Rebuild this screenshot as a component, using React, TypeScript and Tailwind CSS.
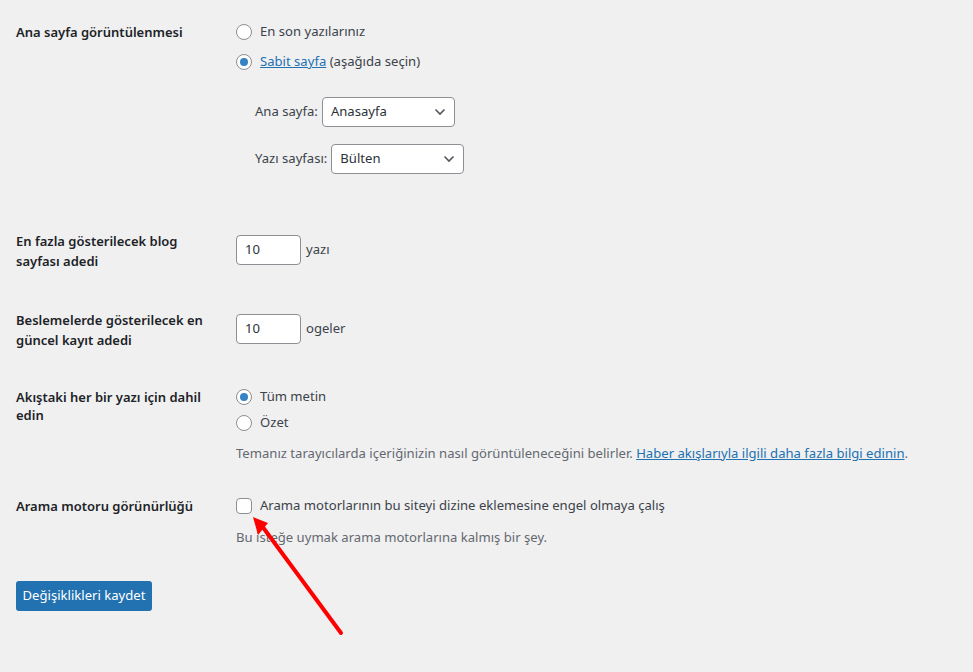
import React from 'react';

const font = { fontFamily: '"Noto Sans", "Open Sans", Arial, sans-serif' };

function Radio({ checked }: { checked?: boolean }) {
  return (
    <span className="flex h-4 w-4 shrink-0 items-center justify-center rounded-full border border-[#8c8f94] bg-white">
      {checked && <span className="h-2 w-2 rounded-full bg-[#3582c4]" />}
    </span>
  );
}

function Select({ value, width }: { value: string; width: string }) {
  return (
    <div className={`flex h-[30px] ${width} items-center justify-between rounded-[4px] border border-[#8c8f94] bg-white pl-2 pr-2`}>
      <span className="text-[#2c3338]">{value}</span>
      <svg width="12" height="8" viewBox="0 0 12 8" fill="none">
        <path d="M1.5 1.5L6 6L10.5 1.5" stroke="#50575e" strokeWidth="1.6" />
      </svg>
    </div>
  );
}

function NumberInput({ value }: { value: string }) {
  return (
    <div className="flex h-[30px] w-[65px] items-center rounded-[4px] border border-[#8c8f94] bg-white px-2 text-[#2c3338]">
      {value}
    </div>
  );
}

export default function App() {
  return (
    <div className="relative min-h-[672px] w-full bg-[#f0f0f1] pl-4 pt-[23px] text-[13.1px] text-[#3c434a]" style={font}>
      {/* Ana sayfa görüntülenmesi */}
      <div className="flex">
        <div className="w-[220px] shrink-0 text-[13px] font-semibold leading-[18px] text-[#1d2327]">Ana sayfa görüntülenmesi</div>
        <div className="flex flex-col">
          <label className="flex h-[18px] items-center gap-2">
            <Radio />
            <span>En son yazılarınız</span>
          </label>
          <label className="mt-[12px] flex h-[18px] items-center gap-2">
            <Radio checked />
            <span>
              <a className="text-[#2271b1] underline">Sabit sayfa</a> (aşağıda seçin)
            </span>
          </label>
          <div className="ml-[19px] mt-[26px] flex items-center gap-[4px]">
            <span>Ana sayfa:</span>
            <Select value="Anasayfa" width="w-[133px]" />
          </div>
          <div className="ml-[19px] mt-[17px] flex items-center gap-[4px]">
            <span>Yazı sayfası:</span>
            <Select value="Bülten" width="w-[133px]" />
          </div>
        </div>
      </div>

      {/* Blog sayfası adedi */}
      <div className="mt-[57px] flex">
        <div className="w-[220px] shrink-0 pr-4 text-[13px] font-semibold leading-[20px] text-[#1d2327]">
          En fazla gösterilecek blog sayfası adedi
        </div>
        <div className="mt-[4px] flex items-center gap-[5px] self-start">
          <NumberInput value="10" />
          <span>yazı</span>
        </div>
      </div>

      {/* Besleme */}
      <div className="mt-[39px] flex">
        <div className="w-[220px] shrink-0 pr-4 text-[13px] font-semibold leading-[20px] text-[#1d2327]">
          Beslemelerde gösterilecek en güncel kayıt adedi
        </div>
        <div className="mt-[4px] flex items-center gap-[5px] self-start">
          <NumberInput value="10" />
          <span>ogeler</span>
        </div>
      </div>

      {/* Akış */}
      <div className="mt-[38px] flex">
        <div className="w-[220px] shrink-0 pr-4 text-[13px] font-semibold leading-[18px] text-[#1d2327]">
          Akıştaki her bir yazı için dahil edin
        </div>
        <div className="flex flex-col">
          <label className="flex h-[18px] items-center gap-2">
            <Radio checked />
            <span>Tüm metin</span>
          </label>
          <label className="mt-[8px] flex h-[18px] items-center gap-2">
            <Radio />
            <span>Özet</span>
          </label>
          <p className="mt-[12px] leading-[18px] text-[#646970]">
            Temanız tarayıcılarda içeriğinizin nasıl görüntüleneceğini belirler.{' '}
            <a className="text-[#2271b1] underline">Haber akışlarıyla ilgili daha fazla bilgi edinin</a>.
          </p>
        </div>
      </div>

      {/* Arama motoru */}
      <div className="mt-[35px] flex">
        <div className="w-[220px] shrink-0 text-[13px] font-semibold leading-[18px] text-[#1d2327]">Arama motoru görünürlüğü</div>
        <div className="flex flex-col">
          <label className="flex h-[18px] items-center gap-2">
            <span className="h-4 w-4 shrink-0 rounded-[4px] border border-[#8c8f94] bg-white" />
            <span>Arama motorlarının bu siteyi dizine eklemesine engel olmaya çalış</span>
          </label>
          <p className="mt-[13px] leading-[18px] text-[#646970]">Bu isteğe uymak arama motorlarına kalmış bir şey.</p>
        </div>
      </div>

      <button className="mt-[35px] h-[30px] w-[136px] rounded-[3px] bg-[#2271b1] text-white">
        Değişiklikleri kaydet
      </button>

      {/* annotation arrow */}
      <svg className="pointer-events-none absolute left-0 top-0" width="973" height="672">
        <line x1="341" y1="633" x2="262" y2="526" stroke="#ff0000" strokeWidth="4" strokeLinecap="round" />
        <polygon points="253,517 268,523 258,535" fill="#ff0000" />
      </svg>
    </div>
  );
}
